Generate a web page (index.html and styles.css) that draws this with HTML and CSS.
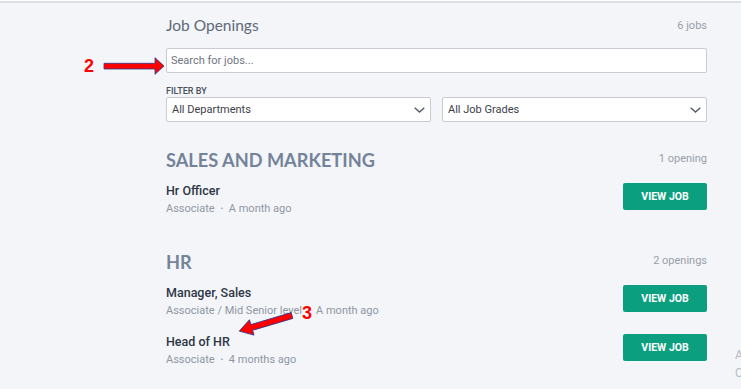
FILE: index.html
```html
<!DOCTYPE html>
<html lang="en">

<head>
    <meta charset="UTF-8">
    <meta name="viewport" content="width=device-width, initial-scale=1.0">
    <title>Job Openings</title>
    <link rel="stylesheet" href="styles.css">
</head>

<body>
    <div class="top-bar"></div>
    <div class="page">
        <div class="board">
            <div class="board-header">
                <h1>Job Openings</h1>
                <span class="count">6 jobs</span>
            </div>
            <input type="text" class="search" placeholder="Search for jobs...">
            <div class="filter-label">FILTER BY</div>
            <div class="filters">
                <div class="select">
                    <span>All Departments</span>
                    <svg width="11" height="6" viewBox="0 0 11 6"><path d="M0.7 0.7 L5.5 5 L10.3 0.7" fill="none" stroke="#555b66" stroke-width="1.4"/></svg>
                </div>
                <div class="select">
                    <span>All Job Grades</span>
                    <svg width="11" height="6" viewBox="0 0 11 6"><path d="M0.7 0.7 L5.5 5 L10.3 0.7" fill="none" stroke="#555b66" stroke-width="1.4"/></svg>
                </div>
            </div>

            <div class="dept">
                <div class="dept-header">
                    <h2>SALES AND MARKETING</h2>
                    <span class="count">1 opening</span>
                </div>
                <div class="job">
                    <div class="job-info">
                        <div class="job-title">Hr Officer</div>
                        <div class="job-meta">Associate <span class="dot">•</span> A month ago</div>
                    </div>
                    <a href="javascript:;" class="view-btn">VIEW JOB</a>
                </div>
            </div>

            <div class="dept">
                <div class="dept-header">
                    <h2>HR</h2>
                    <span class="count">2 openings</span>
                </div>
                <div class="job">
                    <div class="job-info">
                        <div class="job-title">Manager, Sales</div>
                        <div class="job-meta">Associate / Mid Senior level <span class="dot">•</span> A month ago</div>
                    </div>
                    <a href="javascript:;" class="view-btn">VIEW JOB</a>
                </div>
                <div class="job">
                    <div class="job-info">
                        <div class="job-title">Head of HR</div>
                        <div class="job-meta">Associate <span class="dot">•</span> 4 months ago</div>
                    </div>
                    <a href="javascript:;" class="view-btn">VIEW JOB</a>
                </div>
            </div>
        </div>
    </div>

    <!-- cut off text at the right edge -->
    <div class="edge-text">A<br>C</div>

    <!-- annotation arrows -->
    <div class="note note-2">2</div>
    <div class="note note-3">3</div>
    <svg class="arrows" width="741" height="389" viewBox="0 0 741 389">
        <polygon points="104,63.3 155,63.3 155,57.7 164,66 155,74.3 155,69 104,69" fill="#f00" stroke="#2b3a8c" stroke-width="0.8"/>
        <polygon points="0,-3 42,-3 42,-8 55,0 42,8 42,3 0,3" fill="#f00" stroke="#2b3a8c" stroke-width="0.8" transform="translate(292 315.5) rotate(163.5)"/>
    </svg>
</body>

</html>
```

FILE: styles.css
```css
* {
    margin: 0;
    padding: 0;
    box-sizing: border-box;
}

body {
    background-color: #f4f5f8;
    font-family: Roboto, "Liberation Sans", sans-serif;
    overflow: hidden;
    height: 389px;
    position: relative;
}

.top-bar {
    height: 3px;
    border-top: 1px solid #ffffff;
    border-bottom: 2px solid #dcdee4;
}

.page {
    padding: 12px 34px 0 166px;
}

.board-header {
    display: flex;
    justify-content: space-between;
    align-items: center;
    height: 20px;
}

.board-header h1 {
    font-family: Lato, "Open Sans", sans-serif;
    font-weight: 400;
    font-size: 15.5px;
    line-height: 20px;
    color: #5e6a7a;
}

.count {
    font-size: 11px;
    color: #98a0ab;
}

.search {
    display: block;
    width: 100%;
    height: 25px;
    margin-top: 13px;
    border: 1px solid #c9cdd3;
    border-radius: 2px;
    background: #ffffff;
    padding: 0 4px;
    font-family: Roboto, "Liberation Sans", sans-serif;
    font-size: 11px;
    color: #333;
    outline: none;
}

.search::placeholder {
    color: #6f7580;
}

.filter-label {
    margin-top: 12px;
    font-size: 9px;
    line-height: 12px;
    font-weight: 500;
    color: #4a515d;
}

.filters {
    display: grid;
    grid-template-columns: 1fr 1fr;
    gap: 11px;
}

.select {
    height: 25px;
    background: #ffffff;
    border: 1px solid #c9cdd3;
    border-radius: 2px;
    display: flex;
    align-items: center;
    justify-content: space-between;
    padding: 0 5px 0 5px;
    font-size: 11px;
    color: #3b414b;
}

.dept {
    margin-top: 26px;
}

.dept + .dept {
    margin-top: 35px;
}

.dept-header {
    display: flex;
    justify-content: space-between;
    align-items: center;
    height: 22px;
    margin-bottom: 12px;
}

.dept-header h2 {
    font-family: Lato, "Open Sans", sans-serif;
    font-weight: 700;
    font-size: 18.2px;
    line-height: 22px;
    padding-top: 1px;
    color: #73839a;
}

.dept-header .count {
    margin-top: -1px;
}

.job {
    display: flex;
    justify-content: space-between;
    align-items: flex-start;
    height: 33px;
}

.job + .job {
    margin-top: 16px;
}

.job-info {
    padding-top: 1px;
}

.job-title {
    font-size: 12.5px;
    line-height: 16px;
    font-weight: 500;
    color: #2e3747;
}

.job-meta {
    margin-top: 3px;
    font-size: 11px;
    line-height: 14px;
    color: #8e97a4;
}

.dot {
    display: inline-block;
    font-size: 8px;
    margin: 0 3px;
    vertical-align: 1px;
}

.view-btn {
    display: block;
    margin-top: 1px;
    width: 84px;
    height: 27px;
    line-height: 27px;
    background-color: #0b9f7f;
    border-radius: 2px;
    color: #ffffff;
    text-align: center;
    text-decoration: none;
    font-size: 10.5px;
    font-weight: 700;
}

.edge-text {
    position: absolute;
    left: 735px;
    top: 346px;
    font-size: 12px;
    line-height: 18px;
    color: #b8bcc3;
}

.note {
    position: absolute;
    font-family: "Liberation Sans", Arial, sans-serif;
    font-weight: 700;
    font-size: 18px;
    line-height: 18px;
    color: #f00;
}

.note-2 {
    left: 84px;
    top: 57px;
}

.note-3 {
    left: 302px;
    top: 304px;
}

.arrows {
    position: absolute;
    left: 0;
    top: 0;
    pointer-events: none;
}
```
